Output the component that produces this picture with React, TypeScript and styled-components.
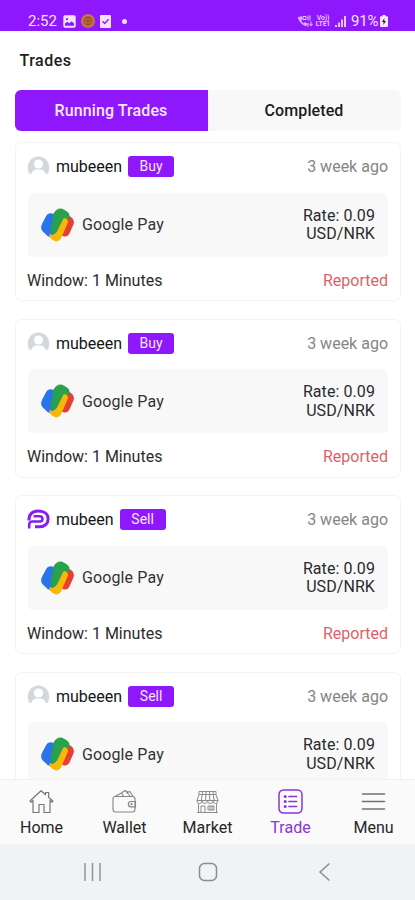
import React from "react";
import styled, { createGlobalStyle } from "styled-components";

const PURPLE = "#8f17fb";

const GlobalStyle = createGlobalStyle`
  *, *::before, *::after { box-sizing: border-box; }
  body { margin: 0; background: #fff; overflow: hidden; }
  svg { display: block; flex: none; }
`;

const Screen = styled.div`
  width: 415px;
  height: 900px;
  display: flex;
  flex-direction: column;
  overflow: hidden;
  background: #fff;
  color: #1c1c1c;
  font: 400 16px/19px Roboto, "Liberation Sans", sans-serif;
`;

const StatusBar = styled.header`
  flex: none;
  height: 31px;
  padding: 11px 27px 0 28px;
  display: flex;
  justify-content: space-between;
  background: ${PURPLE};
  color: #f3e2ff;
  font-size: 15px;
  line-height: 20px;
`;

const StatusGroup = styled.div<{ $gap: number }>`
  height: 20px;
  display: flex;
  align-items: center;
  gap: ${(p) => p.$gap}px;
  white-space: nowrap;
`;

const Clock = styled.span`
  width: 29px;
  margin-right: 1px;
`;

const Battery = styled.span`
  margin-left: 3px;
  letter-spacing: -0.1px;
`;

const Title = styled.h1`
  flex: none;
  margin: 0;
  height: 59px;
  padding: 20px 19.5px 0;
  font-size: 16px;
  font-weight: 500;
  line-height: 19px;
  letter-spacing: 0.5px;
`;

const Tabs = styled.div`
  flex: none;
  height: 41px;
  margin: 0 14px 0 15px;
  display: grid;
  grid-template-columns: 193px 1fr;
  border-radius: 6px;
  overflow: hidden;
`;

const Tab = styled.button<{ $active?: boolean }>`
  border: 0;
  padding: 0 1px 0 0;
  background: ${(p) => (p.$active ? PURPLE : "#f8f8f8")};
  color: ${(p) => (p.$active ? "#f6e8ff" : "#1c1c1c")};
  font: 500 16px/19px Roboto, "Liberation Sans", sans-serif;
  letter-spacing: 0.1px;
`;

const List = styled.main`
  flex: 1;
  min-height: 0;
  overflow: hidden;
  padding: 11px 14px 0 15px;
  display: flex;
  flex-direction: column;
  gap: 17.5px;
`;

const Card = styled.article`
  flex: none;
  height: 159px;
  padding: 12.5px 12px 0 11px;
  border: 1px solid #f4f4f4;
  border-radius: 6px;
`;

const CardHead = styled.div`
  height: 22px;
  display: flex;
  align-items: center;
`;

const Name = styled.span`
  margin: 0 6px;
  color: #151515;
`;

const Badge = styled.span`
  width: 46px;
  height: 21px;
  border-radius: 3px;
  background: ${PURPLE};
  color: #f6e6ff;
  font-size: 14px;
  line-height: 21px;
  text-align: center;
`;

const Time = styled.span`
  margin-left: auto;
  color: #858585;
`;

const Method = styled.div`
  height: 64px;
  margin: 15px 0 0 1px;
  padding: 0 13px;
  display: flex;
  align-items: center;
  border-radius: 5px;
  background: #f8f8f8;
`;

const MethodName = styled.span`
  margin-left: 8px;
  letter-spacing: 0.12px;
  color: #333;
`;

const Rate = styled.span`
  width: 80px;
  margin-left: auto;
  padding-top: 1px;
  line-height: 18.5px;
  letter-spacing: 0.08px;
  text-align: right;
  color: #2b2b2b;
`;

const CardFoot = styled.div`
  margin-top: 14px;
  display: flex;
  justify-content: space-between;
  color: #2b2b2b;
`;

const Reported = styled.span`
  color: #dc626a;
`;

const BottomNav = styled.nav`
  flex: none;
  height: 65px;
  display: grid;
  grid-template-columns: repeat(5, 1fr);
  border-top: 1px solid #f1f1f1;
  background: #fafafa;
`;

const NavItem = styled.a<{ $active?: boolean }>`
  padding-top: 9px;
  display: flex;
  flex-direction: column;
  align-items: center;
  gap: 4px;
  color: ${(p) => (p.$active ? "#8b35d6" : "#262626")};
`;

const SystemNav = styled.footer`
  flex: none;
  height: 56px;
  padding: 0 82px 0 83px;
  display: flex;
  align-items: center;
  justify-content: space-between;
  background: #f1f2f4;
`;

function GalleryIcon() {
  return (
    <svg width="13" height="13" viewBox="0 0 13 13">
      <rect x=".3" y=".3" width="12.4" height="12.4" rx="1.6" fill="#f3e2ff" />
      <path d="M2 10.700V8.500l2.300-1.700 2 1.500 2.300-2.100L11 8.500v2.200Z" fill={PURPLE} />
      <circle cx="4" cy="4.200" r="1.100" fill={PURPLE} />
    </svg>
  );
}

function CoinIcon() {
  return (
    <svg width="14" height="14" viewBox="0 0 14 14">
      <circle cx="7" cy="7" r="5.800" fill="#96503f" stroke="#c9793a" strokeWidth="2.200" />
      <path d="M4.200 5.300h5.600v3.300H4.200Z" fill="none" stroke="#b9702f" strokeWidth="1.200" />
    </svg>
  );
}

function CheckNoteIcon() {
  return (
    <svg width="11" height="13" viewBox="0 0 11 13">
      <rect width="11" height="13" rx="1" fill="#f3e2ff" />
      <path d="m2.500 6.200 2.200 2.300 3.900-4.300" fill="none" stroke={PURPLE} strokeWidth="1.300" />
    </svg>
  );
}

const NotificationDot = styled.span`
  width: 5px;
  height: 5px;
  margin-left: 6px;
  border-radius: 50%;
  background: #f3e2ff;
`;

function CallIcon() {
  return (
    <svg width="16" height="13" viewBox="0 0 16 13" fill="none" stroke="#e3c3ff">
      <path d="M1 2.500c1 4 4 7.200 8 8.500l1.400-2.200-2.700-1.300-1.200 1C5 7.500 4.300 6.300 4 5l1.400-.8-.8-2.700Z" fill="#d8adff" strokeWidth=".5" />
      <path d="M6 1.500h3v3H6Zm5-1v5m2-5v5M14 6.500v4m-1.700-1.700L14 10.800l1.700-2M11 12V8" />
    </svg>
  );
}

const CarrierLabel = styled.span`
  width: 16px;
  margin-right: 3px;
  font-size: 7px;
  font-weight: 700;
  line-height: 6.5px;
  letter-spacing: -0.2px;
  text-align: center;
  color: #e3c3ff;
`;

function SignalIcon() {
  return (
    <svg width="11" height="13" viewBox="0 0 11 13" fill="#e3c3ff">
      <path d="M0 10h2v2H0Zm3-2.500h2V12H3ZM6 4.500h2V12H6ZM9 1h2v11H9Z" />
    </svg>
  );
}

function BatteryIcon() {
  return (
    <svg width="8" height="12" viewBox="0 0 8 12">
      <path d="M2.500 0h3v1.300H7q1 0 1 1V11q0 1-1 1H1q-1 0-1-1V2.300q0-1 1-1h1.500Z" fill="#f7eaff" />
      <path d="M4.400 3 2 7h1.600L3.300 10 6 6H4.300Z" fill="#35105c" />
    </svg>
  );
}

function UserAvatar() {
  return (
    <svg width="23" height="22" viewBox="0 0 23 22">
      <path d="M2 17.500C-1.500 9 3 .5 11.500.5S24.500 9 21 17.500Q11.500 20 2 17.500Z" fill="#d5d8da" />
      <circle cx="11.500" cy="8" r="4.600" fill="#fff" />
      <path d="M4.200 20Q4.200 15 8.500 13.600h6q4.300 1.400 4.300 6.400Z" fill="#fff" />
    </svg>
  );
}

function BrandAvatar() {
  return (
    <svg width="23" height="22" viewBox="0 0 23 22" fill="none" stroke="#871cf1" strokeWidth="3">
      <path d="M2 11.500C1.700 5 5.500 2 11.500 2c6 0 9.600 3.200 9.600 7.900s-3.500 7.900-8.300 7.900H8" />
      <path d="M6.500 7.300h6q3 0 3 2.600t-3 2.600H5Q2.200 12.700 2.200 16v3.500" strokeWidth="2.500" />
    </svg>
  );
}

function GooglePayLogo() {
  return (
    <svg width="33" height="34" viewBox="0 0 100 102">
      <path d="M37 17Q22 12 15 25L4 46Q-5 62 7 72L20 84Q32 92 39 80L62 38L50 16Z" fill="#2874e8" />
      <path d="M74 16L91 27Q104 36 98 50L87 75Q80 90 66 84L55 78L70 30Z" fill="#e93f32" />
      <path d="M39 15Q49-3 65 2L80 11Q91 20 83 33L60 71Q52 84 42 81L34 76Q27 71 30 61Z" fill="#28a34c" />
      <path d="M67 33Q71 28 78 33L81 37Q83 41 80 47L62 89Q54 105 40 99L32 94Q23 87 27 77Q34 85 43 77Q49 72 53 62Z" fill="#fbb708" />
    </svg>
  );
}

function HomeIcon() {
  return (
    <svg width="25" height="25" viewBox="0 0 25 25" fill="none" stroke="#777" strokeWidth="1.200" strokeLinejoin="round">
      <path d="M4 11.500 2.300 13.200 1 12l11-10.300 4.500 4V3.500h3.200v5L24 12l-1.300 1.200L21 11.500V23.500h-6v-8h-5v8H4Z" />
    </svg>
  );
}

function WalletIcon() {
  return (
    <svg width="25" height="25" viewBox="0 0 25 25" fill="none" stroke="#858585" strokeWidth="1.100" strokeLinejoin="round">
      <path d="M3.500 7.500h17q2.500 0 2.500 2.500v10.500q0 2.500-2.500 2.500h-17Q1 23 1 20.500V9.500q0-2 2.500-2Z" />
      <path d="M3 7.500 9.500 4l2.300 3.500M9.500 4l3.500-2.500 5.500 6M13 1.500l3.500 2M15 3.500l3-1 3 5M23.500 12.500H19a2.700 2.700 0 0 0 0 5.400h4.500Z" />
      <circle cx="19.500" cy="15.200" r=".6" />
    </svg>
  );
}

function MarketIcon() {
  return (
    <svg width="25" height="25" viewBox="0 0 25 25" fill="none" stroke="#8c8c8c" strokeWidth="1">
      <path d="M4 2.500h17v3l2 6H2l2-6ZM4 5.500h17M7.500 3 6.300 12M11 3l-.5 9M14.500 3l.3 9M18 3l1.200 9" />
      <path d="M2 11.500q0 3 2.500 3T7 11.500q0 3 2.700 3t2.800-3q0 3 2.800 3t2.700-3q0 3 2.500 3t2.500-3M3.500 14.500v9h18v-9M6 23v-6h4v6M13 17h6v4h-6ZM15 17v4M17 17v4M2 23.500h21" />
    </svg>
  );
}

function TradeIcon() {
  return (
    <svg width="25" height="25" viewBox="0 0 25 25" fill="none" stroke="#8734db" strokeWidth="1.500" strokeLinecap="round">
      <rect x="1" y="1" width="23" height="23" rx="4.500" />
      <path d="M11 7.500h7.500M11 12.500h7.500M11 17.500h7.500" strokeWidth="1.700" />
      <g fill="#8734db" stroke="none">
        <circle cx="7.200" cy="7.500" r="1.500" />
        <circle cx="7.200" cy="12.500" r="1.500" />
        <circle cx="7.200" cy="17.500" r="1.500" />
      </g>
    </svg>
  );
}

function MenuIcon() {
  return (
    <svg width="25" height="25" viewBox="0 0 25 25" stroke="#717171" strokeWidth="1.600" strokeLinecap="round">
      <path d="M1.500 5h22M1.500 12.500h22M1.500 20h22" />
    </svg>
  );
}

function RecentsIcon() {
  return (
    <svg width="19" height="20" viewBox="0 0 19 20" stroke="#929497" strokeWidth="1.500">
      <path d="M2 1v18M9.500 1v18M17 1v18" />
    </svg>
  );
}

function HomeKeyIcon() {
  return (
    <svg width="20" height="20" viewBox="0 0 20 20" fill="none" stroke="#8b8d90" strokeWidth="1.500">
      <rect x="1.500" y="1.500" width="17" height="17" rx="5" />
    </svg>
  );
}

function BackIcon() {
  return (
    <svg width="19" height="20" viewBox="0 0 19 20" fill="none" stroke="#8b8d90" strokeWidth="1.500">
      <path d="M15.500 1.500 6 10l9.500 8.500" />
    </svg>
  );
}

const trades = [
  { id: 1, user: "mubeeen", side: "Buy", branded: false, window: "1 Minutes", status: "Reported" },
  { id: 2, user: "mubeeen", side: "Buy", branded: false, window: "1 Minutes", status: "Reported" },
  { id: 3, user: "mubeen", side: "Sell", branded: true, window: "1 Minutes", status: "Reported" },
  { id: 4, user: "mubeeen", side: "Sell", branded: false },
];

const navItems = [
  { label: "Home", Icon: HomeIcon },
  { label: "Wallet", Icon: WalletIcon },
  { label: "Market", Icon: MarketIcon },
  { label: "Trade", Icon: TradeIcon },
  { label: "Menu", Icon: MenuIcon },
];

export default function App() {
  return (
    <>
      <GlobalStyle />
      <Screen>
        <StatusBar>
          <StatusGroup $gap={5}>
            <Clock>2:52</Clock>
            <GalleryIcon />
            <CoinIcon />
            <CheckNoteIcon />
            <NotificationDot />
          </StatusGroup>
          <StatusGroup $gap={1.5}>
            <CallIcon />
            <CarrierLabel>
              Vo))
              <br />
              LTE1
            </CarrierLabel>
            <SignalIcon />
            <Battery>91%</Battery>
            <BatteryIcon />
          </StatusGroup>
        </StatusBar>
        <Title>Trades</Title>
        <Tabs>
          <Tab $active>Running Trades</Tab>
          <Tab>Completed</Tab>
        </Tabs>
        <List>
          {trades.map((t) => (
            <Card key={t.id}>
              <CardHead>
                {t.branded ? <BrandAvatar /> : <UserAvatar />}
                <Name>{t.user}</Name>
                <Badge>{t.side}</Badge>
                <Time>3 week ago</Time>
              </CardHead>
              <Method>
                <GooglePayLogo />
                <MethodName>Google Pay</MethodName>
                <Rate>Rate: 0.09 USD/NRK</Rate>
              </Method>
              {t.status && (
                <CardFoot>
                  <span>Window: {t.window}</span>
                  <Reported>{t.status}</Reported>
                </CardFoot>
              )}
            </Card>
          ))}
        </List>
        <BottomNav>
          {navItems.map(({ label, Icon }) => (
            <NavItem key={label} $active={label === "Trade"}>
              <Icon />
              <span>{label}</span>
            </NavItem>
          ))}
        </BottomNav>
        <SystemNav>
          <RecentsIcon />
          <HomeKeyIcon />
          <BackIcon />
        </SystemNav>
      </Screen>
    </>
  );
}
